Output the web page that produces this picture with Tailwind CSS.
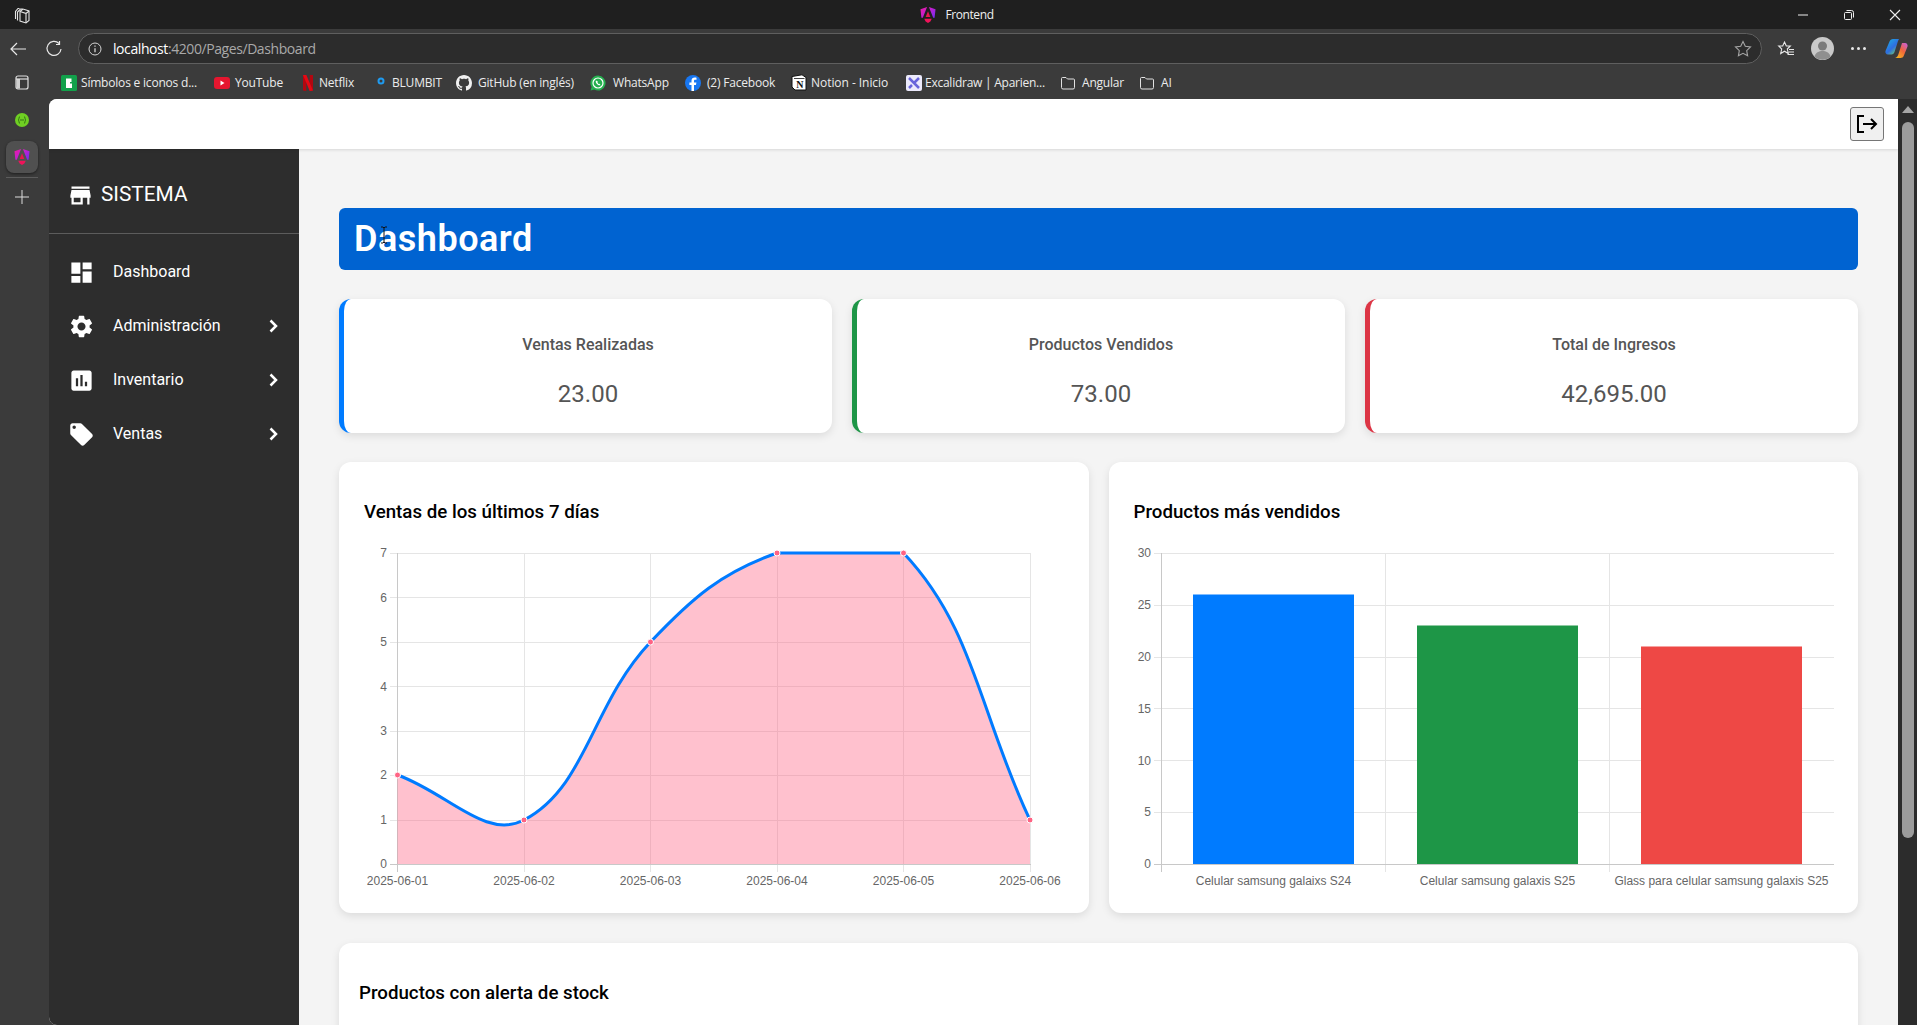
<!DOCTYPE html>
<html lang="es">
<head>
    <meta charset="UTF-8">
    <meta name="viewport" content="width=device-width, initial-scale=1.0">
    <title>Frontend</title>
    <script src="https://cdn.jsdelivr.net/npm/@tailwindcss/browser@4"></script>
</head>
<body class="bg-[#3b3b3b]">
<div class="flex flex-col h-[1025px] overflow-hidden font-['Roboto',sans-serif]">

    <!-- Title bar -->
    <div class="flex items-center h-[29px] shrink-0 bg-[#1f1f1f] text-[#f0f0f0]">
        <div class="flex-1">
            <svg class="ml-[13px]" width="18" height="18" viewBox="0 0 18 18" fill="none" stroke="#e4e4e4" stroke-width="1.100"><path d="M2.500 13V5.500L5 2.500h1.500M4.500 14.500V6L7.500 3h2M7 5.500l3-2.500 6 2v9.500L13 17l-6-2z"/><path d="M7 5.500l6 2V17M13 7.500l3-2.500"/></svg>
        </div>
        <div class="flex items-center gap-[9px] mr-[4px]">
            <svg width="16" height="18" viewBox="0 0 17 18"><defs><linearGradient id="ng" x1="0" y1="0" x2="1" y2="0.800"><stop offset="0" stop-color="#f01aa0"/><stop offset=".5" stop-color="#c41fd0"/><stop offset="1" stop-color="#7b2cf0"/></linearGradient></defs><path d="M0.500 3 7.500 .5 3 12H1.500zM16.500 3 9.500 .5 14 12h1.500z" fill="url(#ng)"/><path d="M8.500 5 11 11H6z" fill="#e8174e"/><path d="M4.500 13h8l-1.500 3-2.500 1.500L6 16z" fill="#f0135a"/></svg>
            <span class="text-[12px] tracking-[-0.4px] font-['Open_Sans',sans-serif]">Frontend</span>
        </div>
        <div class="flex-1 flex justify-end -mr-[1px]">
            <div class="w-[46px] flex justify-center"><svg width="12" height="12" viewBox="0 0 12 12" stroke="#eee"><path d="M1 6h10"/></svg></div>
            <div class="w-[46px] flex justify-center"><svg width="12" height="12" viewBox="0 0 12 12" fill="none" stroke="#eee"><rect x="1.500" y="3.500" width="7" height="7" rx="1"/><path d="M3.500 1.500h5a2 2 0 0 1 2 2v5"/></svg></div>
            <div class="w-[46px] flex justify-center"><svg width="12" height="12" viewBox="0 0 12 12" stroke="#eee" stroke-width="1.100"><path d="M1 1l10 10M11 1 1 11"/></svg></div>
        </div>
    </div>

    <!-- Toolbar -->
    <div class="flex items-center h-[36px] pt-[3px] shrink-0 bg-[#3b3b3b]">
        <div class="w-[36px] flex justify-center"><svg width="18" height="16" viewBox="0 0 18 16" fill="none" stroke="#e8e8e8" stroke-width="1.200"><path d="M17 8H2M8 2 2 8l6 6"/></svg></div>
        <div class="w-[36px] flex justify-center"><svg width="18" height="18" viewBox="0 0 18 18" fill="none" stroke="#e8e8e8" stroke-width="1.200"><path d="M14 3.500A7 7 0 1 0 16 9"/><path d="M14.500 1v3.500H11"/></svg></div>
        <div class="flex-1 flex items-center h-[31px] ml-[6px] pl-[9px] rounded-full bg-[#2c2c2c] border border-[#5f5f5f]">
            <svg width="14" height="14" viewBox="0 0 14 14" fill="none" stroke="#d5d5d5"><circle cx="7" cy="7" r="6"/><path d="M7 6.200v4M7 3.600v1.200" stroke-width="1.300"/></svg>
            <span class="ml-[11px] text-[14px] leading-none text-[#a9a9a9] font-['Open_Sans',sans-serif] tracking-[-0.42px]"><span class="text-white">localhost</span>:4200/Pages/Dashboard</span>
            <svg class="ml-auto mr-[9px]" width="18" height="18" viewBox="0 0 18 18" fill="none" stroke="#a5a5a5" stroke-width="1.100"><path d="m9 1.500 2.300 4.800 5.200.700-3.800 3.600.9 5.200L9 13.300l-4.600 2.500.9-5.200L1.500 7l5.200-.700z"/></svg>
        </div>
        <div class="w-[6px]"></div>
        <div class="w-[36px] flex justify-center"><svg width="18" height="18" viewBox="0 0 18 18" fill="none" stroke="#e8e8e8" stroke-width="1.100"><path d="m7.500 2 1.800 4h4l-3 3 1 4.500-3.800-2.300-3.800 2.300 1-4.500-3-3h4z"/><path d="M12 9.500h5M11.500 12h5.500M10.500 14.500H17"/></svg></div>
        <div class="w-[36px] flex justify-center"><svg width="23" height="23" viewBox="0 0 23 23"><circle cx="11.500" cy="11.500" r="11.500" fill="#c9c9c9"/><circle cx="11.500" cy="9" r="4.500" fill="#7b7b7b"/><path d="M3.500 19.500c1-4 4.500-5.500 8-5.500s7 1.500 8 5.500a11.500 11.500 0 0 1-16 0z" fill="#8f8f8f"/></svg></div>
        <div class="w-[36px] flex justify-center gap-[3px]"><span class="w-[3px] h-[3px] rounded-full bg-[#e8e8e8]"></span><span class="w-[3px] h-[3px] rounded-full bg-[#e8e8e8]"></span><span class="w-[3px] h-[3px] rounded-full bg-[#e8e8e8]"></span></div>
        <div class="w-[41px] flex justify-center">
            <svg width="23" height="21" viewBox="0 0 23 21"><defs><linearGradient id="cpa" x1="0" y1="0" x2="0.800" y2="1"><stop offset="0" stop-color="#19b6e6"/><stop offset=".6" stop-color="#2f6de0"/><stop offset="1" stop-color="#6fd36a"/></linearGradient><linearGradient id="cpb" x1="0.200" y1="1" x2="1" y2="0"><stop offset="0" stop-color="#f7b21f"/><stop offset=".5" stop-color="#f0653c"/><stop offset="1" stop-color="#c65fe8"/></linearGradient></defs><path d="M8 1h6l-1 2-3.500 11c-.5 1.500-1.500 2.500-3 2.500H3c-2 0-3-2-2.500-3.500L4.500 3.500C5 2 6.500 1 8 1z" fill="url(#cpa)"/><path d="M10 20h5.500c1.500 0 2.800-1 3.300-2.300l3.700-9.200C23 7 22 5 20 5h-3l-3.500 11c-.5 1.500-1.500 4-3.500 4z" fill="url(#cpb)"/></svg>
        </div>
    </div>

    <!-- Bookmarks -->
    <div class="flex items-center h-[34px] pt-[1px] shrink-0 bg-[#3b3b3b] text-[12px] text-[#ececec] font-['Open_Sans',sans-serif] tracking-[-0.2px] whitespace-nowrap">
        <div class="w-[44px] flex justify-center">
            <svg width="14" height="15" viewBox="0 0 14 15"><path d="M1.500 4h3.500v9.500H2.500a1 1 0 0 1-1-1z" fill="#cfcfcf"/><rect x="1" y="1" width="12" height="13" rx="2" fill="none" stroke="#e0e0e0" stroke-width="1.200"/><path d="M1 4h12" stroke="#e0e0e0" stroke-width="1.200"/></svg>
        </div>
        <div class="ml-[17px] w-[16px] flex justify-center"><svg width="16" height="16" viewBox="0 0 16 16"><rect width="16" height="16" rx="1.500" fill="#12a14b"/><path d="M5 3.500h5.500v3.500H9v1.500h2V13H5z" fill="#fff"/></svg></div>
        <span class="ml-[4px] w-[116px]">Símbolos e iconos d...</span>
        <div class="ml-[17px] w-[16px] flex justify-center"><svg width="16" height="12" viewBox="0 0 16 12"><rect width="16" height="12" rx="3" fill="#e5162f"/><path d="m6.500 3.500 4 2.500-4 2.500z" fill="#fff"/></svg></div>
        <span class="ml-[5px] w-[46px]">YouTube</span>
        <div class="ml-[19px] w-[16px] flex justify-center"><svg width="10" height="16" viewBox="0 0 10 16"><path d="M0 0h3.300v16L0 15.500zM6.700 0H10v15.500L6.700 16z" fill="#b20710"/><path d="M0 0h3.300l6.700 15.500L6.700 16z" fill="#e50914"/></svg></div>
        <span class="ml-[3px] w-[36px]">Netflix</span>
        <div class="ml-[18px] w-[16px] flex justify-center"><svg class="-mt-[4px]" width="8" height="8" viewBox="0 0 8 8" fill="none" stroke="#1f9bf0" stroke-width="2"><circle cx="4" cy="4" r="2.500"/></svg></div>
        <span class="ml-[3px] w-[48px]">BLUMBIT</span>
        <div class="ml-[16px] w-[16px] flex justify-center"><svg width="16" height="16" viewBox="0 0 16 16"><path fill="#f0f0f0" d="M8 0C3.580 0 0 3.580 0 8c0 3.540 2.290 6.530 5.470 7.590.4.070.55-.17.55-.38 0-.19-.01-.82-.01-1.490-2.010.37-2.530-.49-2.690-.94-.09-.23-.48-.94-.82-1.130-.28-.15-.68-.52-.01-.53.63-.01 1.080.58 1.230.82.720 1.210 1.870.87 2.330.66.070-.52.280-.87.510-1.070-1.780-.2-3.640-.89-3.640-3.950 0-.87.310-1.590.820-2.150-.08-.2-.36-1.020.080-2.120 0 0 .67-.21 2.200.82.640-.18 1.320-.27 2-.27.680 0 1.360.090 2 .27 1.530-1.040 2.200-.82 2.200-.82.440 1.100.160 1.920.080 2.120.510.560.820 1.270.820 2.150 0 3.070-1.870 3.750-3.650 3.950.290.250.540.730.540 1.480 0 1.070-.01 1.930-.01 2.200 0 .210.150.460.550.380A8.013 8.013 0 0016 8c0-4.420-3.580-8-8-8z"/></svg></div>
        <span class="ml-[6px] w-[97px]">GitHub (en inglés)</span>
        <div class="ml-[15px] w-[16px] flex justify-center"><svg width="16" height="16" viewBox="0 0 16 16"><path d="M8 .500a7.500 7.500 0 0 0-6.400 11.400L.600 15.500l3.700-1A7.500 7.500 0 1 0 8 .500z" fill="#25b04f"/><circle cx="8" cy="8" r="5" fill="none" stroke="#fff" stroke-width="1.200"/><path d="M6 5.500c-.700 1 0 2.500 1 3.500s2.500 1.800 3.500 1l-1-1.300-1 .3-1-1.500.3-1z" fill="#fff"/></svg></div>
        <span class="ml-[7px] w-[55px]">WhatsApp</span>
        <div class="ml-[17px] w-[16px] flex justify-center"><svg width="16" height="16" viewBox="0 0 16 16"><circle cx="8" cy="8" r="8" fill="#1877f2"/><path d="M9 16v-6h2l.4-2.400H9V6c0-.7.3-1.200 1.200-1.200h1.300v-2C11 2.700 10.400 2.600 9.800 2.600 7.800 2.600 6.500 3.800 6.500 5.800v1.800H4.400V10h2.100v6z" fill="#fff"/></svg></div>
        <span class="ml-[6px] w-[68px]">(2) Facebook</span>
        <div class="ml-[16px] w-[16px] flex justify-center"><svg width="16" height="17" viewBox="0 0 16 17"><path d="M1 2.500 11 .800l4 2.700v12.500H4L1 13z" fill="#fff" stroke="#111"/><path d="M3 4.500h10.500" stroke="#111" stroke-width=".8"/><text x="8.800" y="13.500" text-anchor="middle" font-size="10" font-family="Liberation Serif" font-weight="700" fill="#111">N</text></svg></div>
        <span class="ml-[4px] w-[78px] tracking-[-0.05px]">Notion - Inicio</span>
        <div class="ml-[17px] w-[16px] flex justify-center"><svg width="16" height="16" viewBox="0 0 16 16"><rect width="16" height="16" rx="2" fill="#eceafc"/><path d="M3 3l10 10M13 3 8 8M3 13l3-3" stroke="#6965db" stroke-width="2.500"/></svg></div>
        <span class="ml-[3px] w-[118px] tracking-[-0.25px]">Excalidraw | Aparien...</span>
        <div class="ml-[17px] w-[16px] flex justify-center"><svg width="16" height="14" viewBox="0 0 16 14" fill="none" stroke="#e2e2e2"><path d="M1.500 2.500a1 1 0 0 1 1-1h3.500l1.500 1.500h6a1 1 0 0 1 1 1v7.500a1.500 1.500 0 0 1-1.500 1.500h-10a1.500 1.500 0 0 1-1.500-1.500z"/></svg></div>
        <span class="ml-[6px] w-[42px]">Angular</span>
        <div class="ml-[15px] w-[16px] flex justify-center"><svg width="16" height="14" viewBox="0 0 16 14" fill="none" stroke="#e2e2e2"><path d="M1.500 2.500a1 1 0 0 1 1-1h3.500l1.500 1.500h6a1 1 0 0 1 1 1v7.500a1.500 1.500 0 0 1-1.500 1.500h-10a1.500 1.500 0 0 1-1.500-1.500z"/></svg></div>
        <span class="ml-[6px]">AI</span>
    </div>

    <div class="flex flex-1 min-h-0">
        <!-- Vertical tab rail -->
        <div class="w-[49px] shrink-0 flex flex-col items-center pt-[14px] pr-[5px]">
            <svg width="14" height="14" viewBox="0 0 14 14"><circle cx="7" cy="7" r="7" fill="#6fcf23"/><path d="M5 3.500C3.500 3.500 4.500 7 3 7c1.500 0 .5 3.500 2 3.500M9 3.500c1.500 0 .5 3.500 2 3.500-1.500 0-.5 3.500-2 3.500M5 7h4" fill="none" stroke="#2e6b14" stroke-width=".9"/></svg>
            <div class="flex items-center justify-center w-[32px] h-[32px] mt-[14px] rounded-lg bg-[#505050] shadow-[0_1px_3px_rgba(0,0,0,0.5)]">
                <svg width="16" height="18" viewBox="0 0 17 18"><defs><linearGradient id="ng2" x1="0" y1="0" x2="1" y2="0.800"><stop offset="0" stop-color="#f01aa0"/><stop offset=".5" stop-color="#c41fd0"/><stop offset="1" stop-color="#7b2cf0"/></linearGradient></defs><path d="M0.500 3 7.500 .5 3 12H1.500zM16.500 3 9.500 .5 14 12h1.500z" fill="url(#ng2)"/><path d="M8.500 5 11 11H6z" fill="#e8174e"/><path d="M4.500 13h8l-1.500 3-2.500 1.500L6 16z" fill="#f0135a"/></svg>
            </div>
            <div class="w-[32px] h-px mt-[4px] bg-[#5c5c5c]"></div>
            <svg class="mt-[12px]" width="14" height="14" viewBox="0 0 14 14" stroke="#dcdcdc"><path d="M7 0v14M0 7h14"/></svg>
        </div>

        <!-- Page -->
        <div class="relative flex-1 flex flex-col min-w-0 bg-[#f4f4f4] rounded-tl-lg rounded-bl-lg overflow-hidden">
            <header class="flex items-center justify-end h-[50px] shrink-0 pr-[14px] bg-white shadow-[0_1px_3px_rgba(0,0,0,0.12)] z-10">
                <button class="flex items-center justify-center w-[34px] h-[34px] rounded-[3px] bg-[#f0f0f0] border border-[#767676]">
                    <svg width="22" height="20" viewBox="0 0 22 20" fill="none" stroke="#000" stroke-width="2"><path d="M8 2H2v16h6M7 10h13M15 5l5 5-5 5"/></svg>
                </button>
            </header>

            <div class="flex flex-1 min-h-0">
                <aside class="w-[250px] shrink-0 bg-[#2d2d2d] text-white">
                    <div class="flex items-center h-[85px] pl-[18px] pt-[8px] border-b border-[#5c5c5c]">
                        <svg class="w-[27px] h-[27px]" viewBox="0 0 24 24" fill="#fff"><path d="M20 4H4v2h16V4zm1 10v-2l-1-5H4l-1 5v2h1v6h10v-6h4v6h2v-6h1zm-9 4H6v-4h6v4z"/></svg>
                        <span class="ml-[7px] text-[20.8px]">SISTEMA</span>
                    </div>
                    <nav class="pt-[11px] text-[16px]">
                        <a class="flex items-center h-[54px] pl-[19px] pr-[22px]">
                            <svg class="w-[27px] h-[27px]" viewBox="0 0 24 24" fill="#fff"><path d="M3 13h8V3H3v10zm0 8h8v-6H3v6zm10 0h8V11h-8v10zm0-18v6h8V3h-8z"/></svg>
                            <span class="ml-[18px]">Dashboard</span>
                        </a>
                        <a class="flex items-center h-[54px] pl-[19px] pr-[21px]">
                            <svg class="w-[27px] h-[27px]" viewBox="0 0 24 24" fill="#fff"><path d="M19.140 12.940c.04-.3.06-.61.06-.94 0-.32-.02-.64-.07-.94l2.030-1.580c.18-.14.23-.41.12-.61l-1.920-3.320c-.12-.22-.37-.29-.59-.22l-2.390.96c-.5-.38-1.030-.7-1.620-.94l-.36-2.540c-.04-.24-.24-.41-.48-.41h-3.840c-.24 0-.43.17-.47.41l-.36 2.540c-.59.24-1.130.57-1.620.94l-2.390-.96c-.22-.08-.47 0-.59.22L2.740 8.870c-.12.21-.08.47.12.61l2.030 1.580c-.05.3-.09.63-.09.94s.02.64.07.94l-2.030 1.580c-.18.14-.23.41-.12.61l1.920 3.320c.12.22.37.29.59.22l2.390-.96c.5.38 1.030.7 1.620.94l.36 2.540c.05.24.24.41.48.41h3.840c.24 0 .44-.17.47-.41l.36-2.540c.59-.24 1.130-.56 1.620-.94l2.390.96c.22.08.47 0 .59-.22l1.920-3.320c.12-.22.07-.47-.12-.61l-2.010-1.580zM12 15.600c-1.980 0-3.600-1.620-3.600-3.600s1.620-3.600 3.600-3.600 3.600 1.620 3.600 3.600-1.620 3.600-3.600 3.600z"/></svg>
                            <span class="ml-[18px]">Administración</span>
                            <svg class="ml-auto" width="9" height="14" viewBox="0 0 9 14" fill="none" stroke="#fff" stroke-width="2.500"><path d="m1.500 1.500 5.500 5.500-5.500 5.500"/></svg>
                        </a>
                        <a class="flex items-center h-[54px] pl-[19px] pr-[21px]">
                            <svg class="w-[27px] h-[27px]" viewBox="0 0 24 24" fill="#fff"><path d="M19 3H5c-1.100 0-2 .9-2 2v14c0 1.100.9 2 2 2h14c1.100 0 2-.9 2-2V5c0-1.100-.9-2-2-2zM9 17H7v-7h2v7zm4 0h-2V7h2v10zm4 0h-2v-4h2v4z"/></svg>
                            <span class="ml-[18px]">Inventario</span>
                            <svg class="ml-auto" width="9" height="14" viewBox="0 0 9 14" fill="none" stroke="#fff" stroke-width="2.500"><path d="m1.500 1.500 5.500 5.500-5.500 5.500"/></svg>
                        </a>
                        <a class="flex items-center h-[54px] pl-[19px] pr-[21px]">
                            <svg class="w-[27px] h-[27px]" viewBox="0 0 24 24" fill="#fff"><path d="M21.410 11.580l-9-9C12.050 2.220 11.550 2 11 2H4c-1.100 0-2 .9-2 2v7c0 .55.22 1.050.59 1.420l9 9c.36.36.86.58 1.410.58.55 0 1.050-.22 1.410-.59l7-7c.37-.36.59-.86.59-1.410 0-.55-.23-1.060-.59-1.420zM5.500 7C4.670 7 4 6.330 4 5.500S4.670 4 5.500 4 7 4.670 7 5.500 6.330 7 5.500 7z"/></svg>
                            <span class="ml-[18px]">Ventas</span>
                            <svg class="ml-auto" width="9" height="14" viewBox="0 0 9 14" fill="none" stroke="#fff" stroke-width="2.500"><path d="m1.500 1.500 5.500 5.500-5.500 5.500"/></svg>
                        </a>
                    </nav>
                </aside>

                <main class="relative flex-1 min-w-0 px-[40px] pt-[59px] overflow-hidden">
                    <!-- Title banner -->
                    <div class="flex items-center h-[62px] px-[15px] rounded-md bg-[#0063d1]">
                        <h1 class="text-[36px] font-semibold text-white tracking-[0.5px]">Dashboard</h1>
                    </div>
                    <!-- mouse cursor from the capture -->
                    <svg class="absolute left-[80px] top-[77px]" width="10" height="18" viewBox="0 0 10 18" fill="none"><path d="M2 1h2l1 1 1-1h2M5 2v14M2 17h2l1-1 1 1h2" stroke="#111"/></svg>

                    <!-- Summary cards -->
                    <div class="grid grid-cols-3 gap-[20px] mt-[29px]">
                        <div class="h-[134px] pt-[34px] text-center bg-white rounded-xl border-l-[5px] border-[#007bff] shadow-[0_3px_8px_rgba(0,0,0,0.1)]">
                            <p class="text-[16px] leading-6 font-medium text-[#555]">Ventas Realizadas</p>
                            <p class="mt-[19px] text-[24px] leading-9 text-[#555]">23.00</p>
                        </div>
                        <div class="h-[134px] pt-[34px] text-center bg-white rounded-xl border-l-[5px] border-[#1e9647] shadow-[0_3px_8px_rgba(0,0,0,0.1)]">
                            <p class="text-[16px] leading-6 font-medium text-[#555]">Productos Vendidos</p>
                            <p class="mt-[19px] text-[24px] leading-9 text-[#555]">73.00</p>
                        </div>
                        <div class="h-[134px] pt-[34px] text-center bg-white rounded-xl border-l-[5px] border-[#dc3545] shadow-[0_3px_8px_rgba(0,0,0,0.1)]">
                            <p class="text-[16px] leading-6 font-medium text-[#555]">Total de Ingresos</p>
                            <p class="mt-[19px] text-[24px] leading-9 text-[#555]">42,695.00</p>
                        </div>
                    </div>

                    <!-- Charts -->
                    <div class="grid grid-cols-2 gap-[20px] mt-[29px]">
                        <div class="h-[451px] px-[25px] pt-[37px] bg-white rounded-xl shadow-[0_3px_8px_rgba(0,0,0,0.1)]">
                            <h2 class="text-[18.72px] leading-[27px] font-medium text-black">Ventas de los últimos 7 días</h2>
                            <svg class="mt-[19px] block font-['Liberation_Sans',sans-serif] text-[12px] fill-[#666]" width="700" height="350" viewBox="364 545 700 350">
                                <g stroke="#e5e5e5" shape-rendering="crispEdges">
                                    <path d="M390 553h641M390 597.500h641M390 642h641M390 686.500h641M390 731h641M390 775h641M390 820h641"/>
                                    <path d="M524 553v319M650.500 553v319M777 553v319M903.500 553v319M1030 553v319"/>
                                </g>
                                <path d="M397.500 553v319M390 864h641" stroke="#c8c8c8" shape-rendering="crispEdges"/>
                                <path d="M397.500 775C448 793 485.500 840.300 524 820C586.700 787.100 591.300 704.500 650.500 642C692.500 597.700 721.300 572.600 777 553C822.500 553 873.100 553 903.500 553C974.300 627.800 979.400 713.200 1030 820V864H397.500Z" fill="#ff6384" fill-opacity="0.4"/>
                                <path d="M397.500 775C448 793 485.500 840.300 524 820C586.700 787.100 591.300 704.500 650.500 642C692.500 597.700 721.300 572.600 777 553C822.500 553 873.100 553 903.500 553C974.300 627.800 979.400 713.200 1030 820" fill="none" stroke="#007bff" stroke-width="3"/>
                                <g fill="#ff6384" stroke="#fff">
                                    <circle cx="397.500" cy="775" r="3"/><circle cx="524" cy="820" r="3"/><circle cx="650.500" cy="642" r="3"/><circle cx="777" cy="553" r="3"/><circle cx="903.500" cy="553" r="3"/><circle cx="1030" cy="820" r="3"/>
                                </g>
                                <g text-anchor="end">
                                    <text x="387" y="557">7</text><text x="387" y="601.500">6</text><text x="387" y="646">5</text><text x="387" y="690.500">4</text><text x="387" y="735">3</text><text x="387" y="779">2</text><text x="387" y="824">1</text><text x="387" y="868">0</text>
                                </g>
                                <g text-anchor="middle">
                                    <text x="397.500" y="885">2025-06-01</text><text x="524" y="885">2025-06-02</text><text x="650.500" y="885">2025-06-03</text><text x="777" y="885">2025-06-04</text><text x="903.500" y="885">2025-06-05</text><text x="1030" y="885">2025-06-06</text>
                                </g>
                            </svg>
                        </div>
                        <div class="h-[451px] px-[25px] pt-[37px] bg-white rounded-xl shadow-[0_3px_8px_rgba(0,0,0,0.1)]">
                            <h2 class="text-[18.72px] leading-[27px] font-medium text-black">Productos más vendidos</h2>
                            <svg class="mt-[19px] block font-['Liberation_Sans',sans-serif] text-[12px] fill-[#666]" width="700" height="350" viewBox="1134 545 700 350">
                                <g stroke="#e5e5e5" shape-rendering="crispEdges">
                                    <path d="M1154 553h680M1154 605h680M1154 657h680M1154 708.500h680M1154 760.500h680M1154 812h680"/>
                                    <path d="M1385.500 553v319M1609.500 553v319"/>
                                </g>
                                <path d="M1161.500 553v319M1154 864h680" stroke="#c8c8c8" shape-rendering="crispEdges"/>
                                <rect x="1193" y="594.500" width="161" height="269.500" fill="#007bff"/>
                                <rect x="1417" y="625.500" width="161" height="238.500" fill="#1e9647"/>
                                <rect x="1641" y="646.500" width="161" height="217.500" fill="#ee4845"/>
                                <g text-anchor="end">
                                    <text x="1151" y="557">30</text><text x="1151" y="609">25</text><text x="1151" y="661">20</text><text x="1151" y="712.500">15</text><text x="1151" y="764.500">10</text><text x="1151" y="816">5</text><text x="1151" y="868">0</text>
                                </g>
                                <g text-anchor="middle">
                                    <text x="1273.500" y="885">Celular samsung galaixs S24</text><text x="1497.500" y="885">Celular samsung galaxis S25</text><text x="1721.500" y="885">Glass para celular samsung galaxis S25</text>
                                </g>
                            </svg>
                        </div>
                    </div>

                    <!-- Stock alerts -->
                    <div class="h-[200px] mt-[30px] px-[20px] pt-[37px] bg-white rounded-xl shadow-[0_3px_8px_rgba(0,0,0,0.1)]">
                        <h2 class="text-[18.72px] leading-[27px] font-medium text-black">Productos con alerta de stock</h2>
                    </div>
                </main>
            </div>
        </div>

        <!-- Scrollbar -->
        <div class="w-[19px] shrink-0 flex flex-col items-center bg-[#2c2c2c]">
            <svg class="mt-[7px]" width="12" height="8" viewBox="0 0 12 8"><path d="M6 0l6 7H0z" fill="#a5a5a5"/></svg>
            <div class="w-[12px] h-[716px] mt-[8px] rounded-full bg-[#9c9c9c]"></div>
        </div>
    </div>
</div>
</body>
</html>
